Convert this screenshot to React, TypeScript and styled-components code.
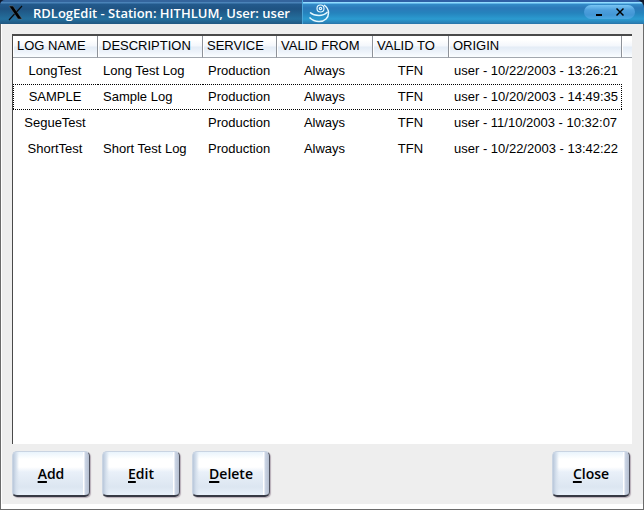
import React from "react";
import styled, { createGlobalStyle, css } from "styled-components";

const Global = createGlobalStyle`
  *, *::before, *::after { box-sizing: border-box; }
  html, body { margin: 0; padding: 0; }
  body { background: #fff; color: #000; font: 13px/16px "Liberation Sans", Arial, sans-serif; }
`;

const Window = styled.main`
  display: flex;
  flex-direction: column;
  min-height: 100vh;
  background: #fff;
  border: solid #6b6b6b;
  border-width: 0 1px 1px;
`;

const TitleBar = styled.header`
  display: flex;
  height: 24px;
  margin: 0 -1px;
  background: #10182c;
`;

const TitleLabel = styled.div`
  display: flex;
  align-items: center;
  flex: none;
  gap: 9px;
  width: 302px;
  padding: 2px 8px 0;
  border-top-left-radius: 5px;
  color: #fff;
  background: linear-gradient(#34659d 0 2px, #4a83b8 2px 3px, #235a8d 4px, #1f5382 9px, #21618f 14px, #246f9d 19px, #205680 24px);
`;

const Title = styled.h1`
  margin: 0;
  font: 650 13px/18px "Open Sans", sans-serif;
  white-space: nowrap;
`;

const TitleFill = styled.div`
  display: flex;
  flex: 1;
  align-items: center;
  justify-content: space-between;
  padding: 2px 9px 0 6px;
  border-top-right-radius: 8px;
  background: linear-gradient(#2f5fa5 0 2px, #91dcff 2px 3px, #62b6e8 3px 4px, #348cc9 4px, #2b79b9 8px, #2583bd 13px, #2b9bd0 19px, #2a7fb4 23px, #2870a5 24px);
  box-shadow: inset 1px 0 #4ca6d9;
`;

const WindowControls = styled.div`
  display: flex;
  align-items: center;
  justify-content: space-around;
  width: 51px;
  height: 14px;
  padding: 0 5px;
  margin-bottom: 3px;
  border-radius: 7px;
  background: linear-gradient(#79c5f4, #4d9fdc 5px, #4296d5 10px, #4aaae3);
`;

const ControlButton = styled.button`
  display: flex;
  width: 16px;
  height: 12px;
  padding: 1px 4px;
  border: 0;
  background: none;
`;

const Content = styled.section`
  display: flex;
  flex: 1;
  flex-direction: column;
  gap: 7px;
  margin: 0 0 5px 1px;
  padding: 10px 11px 7px 10px;
  background: #eee;
`;

const ListView = styled.div`
  flex: 1;
  overflow: hidden;
  border: solid #494949;
  border-width: 2px 0 0 1px;
  background: #fff;
`;

const LogTable = styled.table`
  width: 100%;
  table-layout: fixed;
  border-collapse: separate;
  border-spacing: 0;
`;

const Column = styled.col<{ $width?: number }>`
  ${({ $width }) => $width && css`width: ${$width}px;`}
`;

const HeaderCell = styled.th`
  height: 22px;
  padding: 0 0 2px 4px;
  border-right: 1px solid #8e9299;
  border-bottom: 1px solid #a2a7ae;
  box-shadow: inset 1px 0 #fff;
  background: linear-gradient(#fff 0 4px, #f4f7fc 10px, #e4ecf6 11px, #edf3fa 16px, #fafdff);
  font-weight: normal;
  text-align: left;
  white-space: nowrap;
  &:last-child { border-right: 0; }
`;

const Cell = styled.td<{ $centered?: boolean }>`
  height: 26px;
  padding: 0 0 0 5px;
  text-align: left;
  white-space: nowrap;
  ${({ $centered }) => $centered && css`
    padding: 0 1px 0 0;
    text-align: center;
  `}
`;

const Row = styled.tr<{ $focused?: boolean }>`
  ${({ $focused }) => $focused && css`
    ${Cell} {
      --dots-x: repeating-linear-gradient(90deg, #000 0 1px, transparent 1px 2px);
      --dots-y: repeating-linear-gradient(#000 0 1px, transparent 1px 2px);
      background: var(--dots-x) top / 100% 1px no-repeat, var(--dots-x) bottom / 100% 1px no-repeat;
    }
    ${Cell}:first-child {
      background: var(--dots-x) top / 100% 1px no-repeat, var(--dots-x) bottom / 100% 1px no-repeat,
        var(--dots-y) left / 1px 100% no-repeat;
    }
    ${Cell}:nth-last-child(2) {
      background: var(--dots-x) top / 100% 1px no-repeat, var(--dots-x) bottom / 100% 1px no-repeat,
        var(--dots-y) right / 1px 100% no-repeat;
    }
    ${Cell}:last-child { background: none; }
  `}
`;

const Actions = styled.footer`
  display: flex;
  gap: 12px;
`;

const ActionButton = styled.button<{ $end?: boolean }>`
  width: 78px;
  height: 46px;
  padding: 0;
  border: 1px solid #c9d4e2;
  border-right-color: #50525e;
  border-bottom: 2px solid #373a45;
  border-radius: 5px;
  color: #000;
  background:
    linear-gradient(90deg, #b9c7da 0, #d5e0ed 3px, transparent 6px calc(100% - 6px), #fff calc(100% - 6px) calc(100% - 5px), #ccd6e6 calc(100% - 4px), #b5bfd0),
    linear-gradient(#e9f4fc, #fff 7px 15px, #e9f0f9 20px, #dce6f1 35px, #e8f1fb);
  box-shadow: 1px 1px 1px #b7adb7;
  font: 650 14px/18px "Open Sans", sans-serif;
  ${({ $end }) => $end && css`
    margin: 0 2px 0 auto;
  `}
`;

const Mnemonic = styled.span`
  text-decoration: underline 2px;
  text-underline-offset: 2px;
  text-decoration-skip-ink: none;
`;

const logs = [
  { name: "LongTest", description: "Long Test Log", origin: "user - 10/22/2003 - 13:26:21" },
  { name: "SAMPLE", description: "Sample Log", origin: "user - 10/20/2003 - 14:49:35", focused: true },
  { name: "SegueTest", description: "", origin: "user - 11/10/2003 - 10:32:07" },
  { name: "ShortTest", description: "Short Test Log", origin: "user - 10/22/2003 - 13:42:22" },
];

const XLogo = () => (
  <svg width="16" height="16" viewBox="0 0 16 16" aria-hidden="true">
    <path d="M1 1h4l9 13h-4z" fill="#000" stroke="#68727b" strokeWidth=".5" />
    <path d="M14 1L8.5 7M6.5 9L1 15" stroke="#0a0d10" strokeWidth="1.2" />
  </svg>
);

const Swirl = () => (
  <svg width="22" height="20" viewBox="0 0 22 20" fill="none" stroke="#e6f8ff" aria-hidden="true">
    <circle cx="12.5" cy="5.5" r="3.5" strokeWidth="1.2" />
    <circle cx="12.5" cy="5.5" r="1.2" strokeWidth="1.2" />
    <path d="M2 9.500c3 2.500 6 3 9 3s6-1 8.500-3.500" strokeWidth="1.5" />
    <path d="M1.500 14.500c3 3 6 4 9.500 4 6 0 9.500-4 9.500-8.500 0-3.500-1.500-6-4.500-8" strokeWidth="1.5" />
  </svg>
);

export default function App() {
  return (
    <>
      <Global />
      <Window>
        <TitleBar>
          <TitleLabel>
            <XLogo />
            <Title>RDLogEdit - Station: HITHLUM, User: user</Title>
          </TitleLabel>
          <TitleFill>
            <Swirl />
            <WindowControls>
              <ControlButton type="button" aria-label="Minimize">
                <svg width="8" height="10" viewBox="0 0 8 10" aria-hidden="true">
                  <path d="M1 7h6v2H1z" />
                </svg>
              </ControlButton>
              <ControlButton type="button" aria-label="Close window">
                <svg width="8" height="10" viewBox="0 0 8 10" stroke="#000" strokeWidth="1.5" aria-hidden="true">
                  <path d="M.5 1.500l7 7M7.500 1.500l-7 7" />
                </svg>
              </ControlButton>
            </WindowControls>
          </TitleFill>
        </TitleBar>
        <Content>
          <ListView>
            <LogTable>
              <colgroup>
                <Column $width={85} />
                <Column $width={105} />
                <Column $width={74} />
                <Column $width={96} />
                <Column $width={76} />
                <Column $width={173} />
                <Column />
              </colgroup>
              <thead>
                <tr>
                  <HeaderCell scope="col">LOG NAME</HeaderCell>
                  <HeaderCell scope="col">DESCRIPTION</HeaderCell>
                  <HeaderCell scope="col">SERVICE</HeaderCell>
                  <HeaderCell scope="col">VALID FROM</HeaderCell>
                  <HeaderCell scope="col">VALID TO</HeaderCell>
                  <HeaderCell scope="col">ORIGIN</HeaderCell>
                  <HeaderCell aria-hidden="true" />
                </tr>
              </thead>
              <tbody>
                {logs.map((log) => (
                  <Row key={log.name} $focused={log.focused}>
                    <Cell $centered>{log.name}</Cell>
                    <Cell>{log.description}</Cell>
                    <Cell>Production</Cell>
                    <Cell $centered>Always</Cell>
                    <Cell $centered>TFN</Cell>
                    <Cell>{log.origin}</Cell>
                    <Cell />
                  </Row>
                ))}
              </tbody>
            </LogTable>
          </ListView>
          <Actions>
            <ActionButton type="button"><Mnemonic>A</Mnemonic>dd</ActionButton>
            <ActionButton type="button"><Mnemonic>E</Mnemonic>dit</ActionButton>
            <ActionButton type="button"><Mnemonic>D</Mnemonic>elete</ActionButton>
            <ActionButton type="button" $end><Mnemonic>C</Mnemonic>lose</ActionButton>
          </Actions>
        </Content>
      </Window>
    </>
  );
}
